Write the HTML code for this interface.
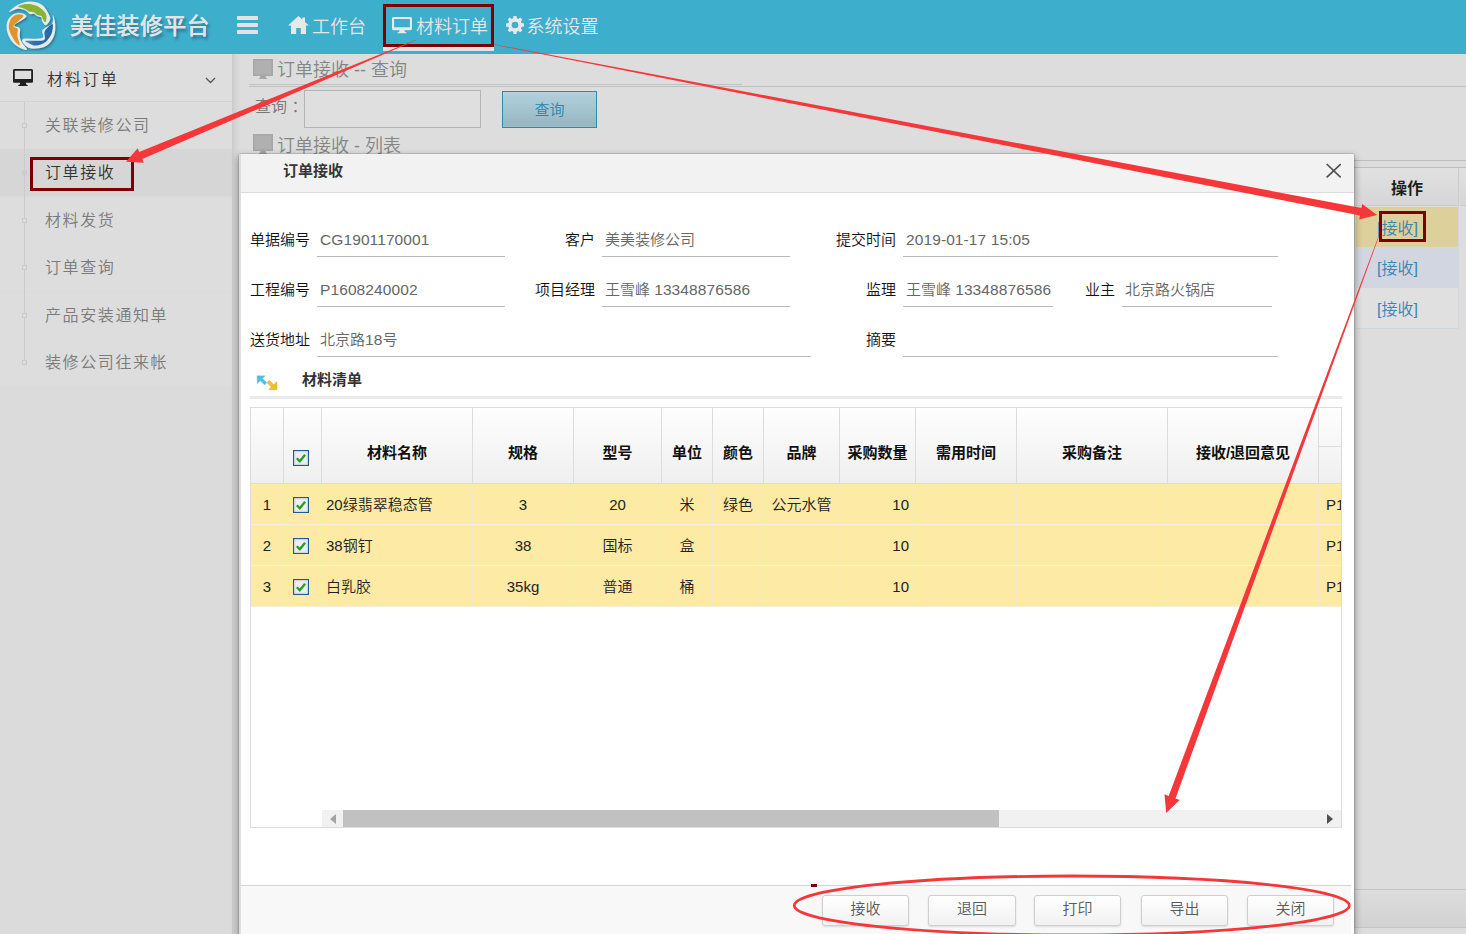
<!DOCTYPE html>
<html lang="zh-CN">
<head>
<meta charset="utf-8">
<title>美佳装修平台</title>
<style>
*{box-sizing:border-box;margin:0;padding:0}
html,body{width:1466px;height:934px;overflow:hidden}
body{position:relative;background:#dddddd;font-family:"Liberation Sans","Noto Sans CJK SC",sans-serif;font-size:15px;font-weight:350;color:#333}
.abs{position:absolute}
/* header */
#hdr{position:absolute;left:0;top:0;width:1466px;height:54px;background:#3eaecd}
#brand{position:absolute;left:70px;top:9px;font-size:23px;font-weight:500;line-height:34px;color:#e1e4e6;letter-spacing:.3px;text-shadow:0 0 .6px #e1e4e6,2px 3px 3px rgba(0,0,0,.33);white-space:nowrap}
.nav{position:absolute;top:12px;height:30px;line-height:30px;font-size:18px;font-weight:350;color:#e6e6e6;white-space:nowrap}
/* sidebar */
#side{position:absolute;left:0;top:54px;width:232px;height:880px;background:#dbdbdb}
#side .top{position:absolute;left:0;top:0;width:232px;height:48px;background:#dedede;border-bottom:1px solid #d3d3d3}
#side .top span{position:absolute;left:47px;top:14px;font-size:16px;line-height:24px;letter-spacing:1.9px;color:#333}
.sub{position:absolute;left:0;width:232px;height:47px;background:#dddddd}
.sub span{position:absolute;left:45px;top:12px;font-size:16px;line-height:24px;letter-spacing:1.6px;color:#7b7b7b;white-space:nowrap}
.sub i{position:absolute;left:22px;top:21px;width:5px;height:5px;border:1px solid #c9c9c9;background:#dddddd;z-index:2}
.sub.on{background:#d6d6d6}
.sub.on span{color:#333}
.sub.on i{background:#cdcdcd;border-color:#cdcdcd}
/* content */
#main{position:absolute;left:232px;top:54px;width:1234px;height:880px;background:#dddddd}
.ptitle{position:absolute;font-size:18px;line-height:26px;color:#858585;white-space:nowrap}
.redbox{position:absolute;border:3px solid #7d0000}
/* dialog */
#dlg{position:absolute;left:239px;top:154px;width:1115px;height:790px;background:#fff;border-radius:2px 2px 0 0;box-shadow:0 0 0 1px rgba(0,0,0,.10),0 3px 7px 1px rgba(0,0,0,.36)}
#dlg .tbar{position:absolute;left:0;top:1px;width:100%;height:39px;border-radius:2px 2px 0 0;background:#f2f2f2;border-bottom:1px solid #dcdcdc}
#dlg .tbar b{position:absolute;left:44px;top:6px;font-size:15px;line-height:22px;color:#363636}
.lbl{position:absolute;margin-top:1px;font-size:15px;line-height:22px;color:#111;white-space:nowrap;text-align:right}
.val{position:absolute;margin-top:1px;font-size:15px;line-height:22px;color:#666;white-space:nowrap}
.ul{position:absolute;height:1px;background:#b9b9b9}
.val u,.c u{text-decoration:none;font-size:15.500px;letter-spacing:.1px}
.bgr{font-size:16px;line-height:43px;text-align:left;padding-left:21px;color:#3b84b6;white-space:nowrap}

#grid{position:absolute;border:1px solid #dcdcdc;background:#fff;overflow:hidden}
.gh{position:absolute;background:linear-gradient(#fefefe,#efefef);border-bottom:1px solid #dcdcdc}
.hc{position:absolute;top:0;height:76px;border-right:1px solid #dcdcdc;text-align:center;font-weight:700;font-size:15px;line-height:22px;padding-top:34px;color:#111;white-space:nowrap;overflow:hidden}
.gr{position:absolute;left:0;width:1090px;height:41px;background:#fdeaa5;border-bottom:1px solid #f6f1dc}
.c{position:absolute;top:0;height:40px;border-right:1px solid #f1ead0;text-align:center;font-size:15px;line-height:22px;padding-top:10px;color:#222;white-space:nowrap;overflow:hidden}
.c.l{text-align:left;padding-left:4px}
.c.l2{text-align:left;padding-left:7px}
.c.r{text-align:right;padding-right:6px}
.cbw{position:absolute;left:9px;margin-top:-1px;width:16px;height:16px}
.cbw svg{display:block}
.btn{position:absolute;height:31px;border:1px solid #cfcfcf;border-radius:3px;background:linear-gradient(#ffffff,#f1f1f1);box-shadow:0 1px 2px rgba(0,0,0,.12);text-align:center;font-size:15px;line-height:25px;color:#5a5a5a}
</style>
</head>
<body>
<!-- ============ main background content ============ -->
<div id="main">
  <div class="abs" style="left:0;top:0;width:9px;height:880px;background:linear-gradient(to right,#cacaca,#d4d4d4 35%,#dddddd)"></div>
  <svg class="abs" style="left:21px;top:5px" width="20" height="20" viewBox="0 0 20 20"><rect x="0" y="0" width="20" height="17" fill="#a7a7a8"/><rect x="1.500" y="1.500" width="17" height="14" fill="#b0b0b1"/><path d="M7.500 17h5l.8 2.300H6.700z" fill="#a3a3a3"/><rect x="6" y="19" width="8" height="1" fill="#a8a8a8"/><rect x="9.500" y="14.500" width="1.600" height="1.200" fill="#a9c04a"/></svg>
  <div class="ptitle" style="left:45px;top:3px">订单接收 -- 查询</div>
  <div class="abs" style="left:17px;top:30px;width:493px;height:1px;background:#c1c1c1"></div>
  <div class="abs" style="left:17px;top:32px;width:1217px;height:1px;background:#c1c1c1"></div>
  <div class="abs" style="left:23px;top:41px;font-size:16px;line-height:24px;color:#787878">查询<span style="margin-left:4.500px">：</span></div>
  <div class="abs" style="left:72px;top:36px;width:177px;height:38px;border:1px solid #b4b4b4;background:#dfdfdf"></div>
  <div class="abs" style="left:270px;top:37px;width:95px;height:37px;border:1px solid #3487af;background:linear-gradient(#b4d3dc,#adcdd8 12%,#a1c1cd 60%,#98b7c2 92%,#9dbcc7);color:#2f84af;font-size:15px;line-height:35px;text-align:center">查询</div>
  <svg class="abs" style="left:21px;top:80px" width="20" height="20" viewBox="0 0 20 20"><rect x="0" y="0" width="20" height="17" fill="#a7a7a8"/><rect x="1.500" y="1.500" width="17" height="14" fill="#b0b0b1"/><path d="M7.500 17h5l.8 2.300H6.700z" fill="#a3a3a3"/><rect x="6" y="19" width="8" height="1" fill="#a8a8a8"/><rect x="9.500" y="14.500" width="1.600" height="1.200" fill="#a9c04a"/></svg>
  <div class="ptitle" style="left:45px;top:78.500px">订单接收 - 列表</div>
  <div class="abs" style="left:1110px;top:106px;width:124px;height:1px;background:#bebebe"></div>
  <!-- background grid (right part visible) -->
  <div class="abs" style="left:1122px;top:113px;width:112px;height:1px;background:#bebebe"></div>
  <div class="abs" style="left:1124px;top:114px;width:103px;height:38px;background:linear-gradient(#e1e1e1,#d6d6d6);border-right:1px solid #cbcbcb;border-bottom:1px solid #cbcbcb;text-align:center;font-size:16px;font-weight:700;line-height:42px;color:#1d1d1d">操作</div>
  <div class="abs" style="left:1228px;top:114px;width:6px;height:38px;background:linear-gradient(#e1e1e1,#d6d6d6);border-bottom:1px solid #cbcbcb"></div>
  <div class="abs bgr" style="left:1124px;top:152.500px;width:102px;height:40.500px;background:#ddd09a">[接收]</div>
  <div class="abs bgr" style="left:1124px;top:193px;width:102px;height:41px;background:#d2d6e0">[接收]</div>
  <div class="abs bgr" style="left:1124px;top:234px;width:102px;height:41px;background:#e0e0e0;border-bottom:1px solid #cdd5de">[接收]</div>
  <div class="abs" style="left:1226px;top:152px;width:1px;height:124px;background:#d3d6da"></div>
  <!-- pager bar at bottom -->
  <div class="abs" style="left:1122px;top:835px;width:112px;height:39px;background:linear-gradient(#dddddd,#d2d2d2);border-top:1px solid #c4c4c4;border-bottom:1px solid #c4c4c4"></div>
</div>

<!-- ============ sidebar ============ -->
<div id="side">
  <div class="top">
    <svg class="abs" style="left:13px;top:15px" width="20" height="18" viewBox="0 0 20 18"><path d="M1.6 0h16.8c.9 0 1.6.7 1.6 1.6v10.6c0 .9-.7 1.6-1.6 1.6h-5.6l.5 1.9c.8.1 1.5.3 1.5.8 0 .4-.4.6-.9.6H6c-.5 0-.9-.2-.9-.6 0-.5.7-.7 1.500-.8l.5-1.900H1.600C.7 13.800 0 13.100 0 12.200V1.600C0 .7.700 0 1.600 0zm.2 1.700v8.400h16.400V1.700z" fill="#1f1f1f"/></svg>
    <span>材料订单</span>
    <svg class="abs" style="left:204.500px;top:22.500px" width="11" height="7" viewBox="0 0 11 7"><path d="M1 1l4.500 4.500L10 1" fill="none" stroke="#555" stroke-width="1.300"/></svg>
  </div>
  <div class="abs" style="left:24px;top:48px;width:1px;height:262px;background:#cbcbcb;z-index:1"></div>
  <div class="sub" style="top:48px"><i></i><span>关联装修公司</span></div>
  <div class="sub on" style="top:95px"><i></i><span>订单接收</span></div>
  <div class="sub" style="top:143px"><i></i><span>材料发货</span></div>
  <div class="sub" style="top:190px"><i></i><span>订单查询</span></div>
  <div class="sub" style="top:238px"><i></i><span>产品安装通知单</span></div>
  <div class="sub" style="top:285px"><i></i><span>装修公司往来帐</span></div>
  
</div>

<!-- ============ header ============ -->
<div id="hdr">
  <svg class="abs" style="left:0;top:0" width="64" height="51" viewBox="0 0 64 51">
<defs><filter id="ls" x="-20%" y="-20%" width="150%" height="150%"><feDropShadow dx="1.2" dy="1.4" stdDeviation="0.9" flood-color="#1b3a4a" flood-opacity=".55"/></filter><linearGradient id="lb" x1="0" y1="0" x2="1" y2="0"><stop offset="0" stop-color="#5f86c4"/><stop offset=".35" stop-color="#2d6fae"/><stop offset="1" stop-color="#2469ab"/></linearGradient></defs>
<g filter="url(#ls)" fill="#e8eaeb">
<path d="M9.0 12.0C9.2 11.2 14.2 6.7 18.0 4.8C21.9 2.9 25.6 1.5 30.0 1.5C34.4 1.5 38.5 2.3 42.0 4.8C45.5 7.3 47.8 12.1 49.2 15.0C50.6 17.9 50.5 18.5 49.8 20.4C49.1 22.3 47.0 25.1 45.6 25.2C44.2 25.3 42.8 22.4 42.0 21.0C41.2 19.6 42.3 18.3 41.4 17.4C40.5 16.5 38.6 16.9 37.2 16.2C35.8 15.5 34.9 14.2 33.6 13.8C32.3 13.4 31.2 14.5 30.0 14.1C28.8 13.7 28.3 12.2 27.0 11.4C25.7 10.6 24.7 10.0 22.8 9.6C20.9 9.2 19.3 8.6 16.8 9.0C14.3 9.4 8.8 12.8 9.0 12.0z"/>
<path d="M18.0 12.9C21.1 12.7 27.1 14.2 26.4 16.5C25.7 18.8 15.6 23.1 14.4 25.2C13.2 27.3 18.8 26.2 19.8 28.2C20.8 30.2 19.5 33.5 19.8 36.0C20.1 38.5 20.3 39.5 21.6 42.0C22.9 44.5 27.7 48.9 27.0 49.8C26.3 50.7 21.1 48.8 18.0 46.8C14.9 44.8 12.3 42.6 10.2 39.0C8.1 35.4 6.7 31.0 6.6 27.0C6.5 23.0 7.5 20.0 9.6 17.4C11.7 14.8 14.9 13.1 18.0 12.9z"/>
<path d="M52.8 15.0C53.3 15.1 55.0 20.1 55.2 24.0C55.4 27.9 55.5 32.0 54.0 36.0C52.5 40.0 50.1 43.3 46.8 45.6C43.5 47.9 39.6 48.4 36.0 48.6C32.4 48.8 29.4 48.6 27.0 46.8C24.6 45.0 20.2 40.6 23.0 39.0C25.8 37.4 38.4 39.8 42.0 38.1C45.6 36.5 40.7 32.7 42.6 30.0C44.5 27.3 50.3 26.1 52.2 23.4C54.1 20.6 52.2 14.9 52.8 15.0z"/>
</g>
<path d="M18.0 6.3C18.3 5.5 23.8 3.9 27.0 3.9C30.2 3.9 34.1 4.5 37.2 6.0C40.3 7.5 44.1 10.8 45.6 13.2C47.1 15.6 46.4 18.9 46.2 20.4C46.1 21.8 45.4 22.3 44.7 21.9C44.1 21.5 42.8 19.0 42.3 18.0C41.8 17.0 42.2 16.4 41.4 15.9C40.5 15.4 38.5 15.6 37.2 15.0C35.9 14.4 35.0 12.9 33.6 12.3C32.2 11.7 30.2 12.0 28.8 11.4C27.4 10.8 27.0 9.8 25.2 9.0C23.4 8.2 17.7 7.1 18.0 6.3z" fill="#89b337"/>
<path d="M17.4 14.4C19.1 14.2 24.0 14.5 23.4 16.2C22.8 17.9 14.4 23.9 13.5 25.8C12.6 27.7 17.1 27.3 17.7 28.8C18.3 30.3 17.1 33.6 17.4 36.0C17.7 38.4 20.2 44.2 19.8 45.0C19.4 45.8 16.5 43.5 15.0 41.4C13.5 39.3 10.5 33.8 9.6 31.2C8.7 28.6 8.6 26.1 9.0 24.0C9.4 21.9 10.7 18.8 12.0 17.4C13.3 16.0 15.7 14.6 17.4 14.4z" fill="#e0952a"/>
<path d="M52.5 24.0C53.5 24.4 52.6 30.9 51.6 33.6C50.6 36.3 47.9 40.2 45.6 42.0C43.3 43.8 38.5 45.4 36.0 45.6C33.5 45.8 30.3 43.9 28.8 43.2C27.3 42.5 23.6 41.2 25.8 40.8C28.1 40.3 41.0 41.6 43.8 40.2C46.6 38.8 43.4 33.6 44.7 31.2C46.0 28.8 51.5 23.6 52.5 24.0z" fill="url(#lb)"/>
</svg>
  <div id="brand">美佳装修平台</div>
  <!-- hamburger -->
  <div class="abs" style="left:237px;top:16px;width:21px;height:3.500px;background:#e3e3e3;border-radius:1px"></div>
  <div class="abs" style="left:237px;top:23px;width:21px;height:3.500px;background:#e3e3e3;border-radius:1px"></div>
  <div class="abs" style="left:237px;top:30px;width:21px;height:3.500px;background:#e3e3e3;border-radius:1px"></div>
  <!-- home -->
  <svg class="abs" style="left:288px;top:16px" width="21" height="18" viewBox="0 0 21 18"><path d="M10.500 0L0 9.600h3V18h5.200v-6h4.600v6H18V9.600h3L17 5.900V1.500h-2.600v2z" fill="#e8e8e8"/></svg>
  <div class="nav" style="left:312px">工作台</div>
  <!-- active underline -->
  <div class="abs" style="left:383px;top:47px;width:111px;height:4px;background:#e2e2e2"></div>
  <svg class="abs" style="left:392px;top:17px" width="20" height="17" viewBox="0 0 20 17"><path d="M1.600 0h16.800c.9 0 1.600.7 1.600 1.600v10c0 .9-.7 1.600-1.600 1.600h-5.900l.4 1.700c.8.100 1.700.3 1.700.8 0 .4-.4.600-.9.600H6.300c-.5 0-.9-.2-.9-.6 0-.5.900-.7 1.700-.8l.4-1.700H1.600C.7 13.200 0 12.500 0 11.600v-10C0 .7.700 0 1.600 0zm.5 2v8.300h15.800V2z" fill="#e8e8e8"/></svg>
  <div class="nav" style="left:416px">材料订单</div>
  <!-- gear -->
  <svg class="abs" style="left:505.500px;top:15.800px" width="18" height="18" viewBox="0 0 19 19"><path fill="#e8e8e8" fill-rule="evenodd" d="M8 0h3l.5 2.500 1.500.6 2.100-1.400 2.100 2.100-1.400 2.100.6 1.500 2.600.6v3l-2.600.5-.6 1.500 1.400 2.100-2.100 2.100-2.100-1.400-1.500.6L11 19H8l-.5-2.600-1.500-.6-2.100 1.400-2.100-2.100 1.400-2.100-.6-1.500L0 11V8l2.600-.6.600-1.500-1.400-2.100 2.100-2.100L6 3.100l1.500-.6zM9.500 6a3.500 3.500 0 100 7 3.500 3.500 0 000-7z"/></svg>
  <div class="nav" style="left:526.500px">系统设置</div>
</div>
<div class="redbox" style="left:383px;top:4px;width:111px;height:43px"></div>
<div class="redbox" style="left:30px;top:157px;width:104px;height:34px"></div>
<div class="redbox" style="left:1379px;top:211px;width:47px;height:31px"></div>

<div id="dlg"><div class="abs" style="left:0;top:-1px;width:1115px;height:790px">
<div class="abs" style="left:0;top:1px;width:2px;height:800px;background:#dedede;z-index:3"></div><div class="tbar"><b>订单接收</b><svg class="abs" style="left:1087px;top:9px" width="15" height="15" viewBox="0 0 15 15"><path d="M.7 1l14 13.300M14.700 1L.7 14.300" stroke="#505050" stroke-width="1.700" fill="none"/></svg></div>
<div class="lbl" style="left:-9px;top:75px;width:80px">单据编号</div>
<div class="val" style="left:81px;top:75px"><u>CG1901170001</u></div>
<div class="ul" style="left:78px;top:103px;width:188px"></div>
<div class="lbl" style="left:276px;top:75px;width:80px">客户</div>
<div class="val" style="left:366px;top:75px">美美装修公司</div>
<div class="ul" style="left:363px;top:103px;width:188px"></div>
<div class="lbl" style="left:577px;top:75px;width:80px">提交时间</div>
<div class="val" style="left:667px;top:75px"><u>2019-01-17 15:05</u></div>
<div class="ul" style="left:664px;top:103px;width:375px"></div>
<div class="lbl" style="left:-9px;top:125px;width:80px">工程编号</div>
<div class="val" style="left:81px;top:125px"><u>P1608240002</u></div>
<div class="ul" style="left:78px;top:153px;width:188px"></div>
<div class="lbl" style="left:276px;top:125px;width:80px">项目经理</div>
<div class="val" style="left:366px;top:125px">王雪峰 <u>13348876586</u></div>
<div class="ul" style="left:363px;top:153px;width:188px"></div>
<div class="lbl" style="left:577px;top:125px;width:80px">监理</div>
<div class="val" style="left:667px;top:125px">王雪峰 <u>13348876586</u></div>
<div class="ul" style="left:664px;top:153px;width:150px"></div>
<div class="lbl" style="left:796px;top:125px;width:80px">业主</div>
<div class="val" style="left:886px;top:125px">北京路火锅店</div>
<div class="ul" style="left:883px;top:153px;width:150px"></div>
<div class="lbl" style="left:-9px;top:175px;width:80px">送货地址</div>
<div class="val" style="left:81px;top:175px">北京路<u>18</u>号</div>
<div class="ul" style="left:78px;top:203px;width:494px"></div>
<div class="lbl" style="left:577px;top:175px;width:80px">摘要</div>
<div class="ul" style="left:664px;top:203px;width:375px"></div>
<svg class="abs" style="left:17px;top:222px" width="22" height="16" viewBox="0 0 22 16"><path d="M1 .7h8.300L6.600 3.400l4.300 4.300-2.300 2.300-4.300-4.300L1.200 8.900z" fill="#4fbde0" stroke="#8fd6ec" stroke-width=".5"/><path d="M21 14.700h-8.300l2.700-2.700-4.300-4.300 2.300-2.300 4.300 4.300 3.100-3.200z" fill="#e7c12f" stroke="#cfa92a" stroke-width=".5"/></svg>
<div class="abs" style="left:63px;top:216px;font-size:15px;font-weight:700;line-height:22px;color:#333">材料清单</div>
<div class="abs" style="left:11px;top:243px;width:1092px;height:3px;background:#ebebeb"></div>
<div id="grid" style="left:11px;top:254px;width:1092px;height:421px">
<div class="gh" style="left:0;top:0;width:1090px;height:76px"></div>
<div class="hc" style="left:0px;width:33px"></div>
<div class="hc" style="left:33px;width:38px"><span class="cbw" style="top:43px"><svg class="cb" width="16" height="16" viewBox="0 0 16 16"><rect x=".6" y=".6" width="14.800" height="14.800" fill="#f3f3f3" stroke="#20598f" stroke-width="1.200"/><rect x="2" y="2" width="12" height="12" fill="#efefef" stroke="#d9dee3" stroke-width="1"/><path d="M3.800 8.200l3 3 5.300-6.500" fill="none" stroke="#22a022" stroke-width="2.300"/></svg></span></div>
<div class="hc" style="left:71px;width:151px">材料名称</div>
<div class="hc" style="left:222px;width:101px">规格</div>
<div class="hc" style="left:323px;width:88px">型号</div>
<div class="hc" style="left:411px;width:51px">单位</div>
<div class="hc" style="left:462px;width:51px">颜色</div>
<div class="hc" style="left:513px;width:76px">品牌</div>
<div class="hc" style="left:589px;width:76px">采购数量</div>
<div class="hc" style="left:665px;width:101px">需用时间</div>
<div class="hc" style="left:766px;width:151px">采购备注</div>
<div class="hc" style="left:917px;width:151px">接收/退回意见</div>
<div class="hc" style="left:1068px;width:24px"></div>
<div class="abs" style="left:1068px;top:38px;width:24px;height:1px;background:#dcdcdc"></div>
<div class="gr" style="top:76px">
<div class="c" style="left:0px;width:33px">1</div>
<div class="c" style="left:33px;width:38px"><span class="cbw" style="top:14px"><svg class="cb" width="16" height="16" viewBox="0 0 16 16"><rect x=".6" y=".6" width="14.800" height="14.800" fill="#f3f3f3" stroke="#20598f" stroke-width="1.200"/><rect x="2" y="2" width="12" height="12" fill="#efefef" stroke="#d9dee3" stroke-width="1"/><path d="M3.800 8.200l3 3 5.300-6.500" fill="none" stroke="#22a022" stroke-width="2.300"/></svg></span></div>
<div class="c l" style="left:71px;width:151px">20绿翡翠稳态管</div>
<div class="c" style="left:222px;width:101px">3</div>
<div class="c" style="left:323px;width:88px">20</div>
<div class="c" style="left:411px;width:51px">米</div>
<div class="c" style="left:462px;width:51px">绿色</div>
<div class="c" style="left:513px;width:76px">公元水管</div>
<div class="c r" style="left:589px;width:76px">10</div>
<div class="c" style="left:665px;width:101px"></div>
<div class="c" style="left:766px;width:151px"></div>
<div class="c" style="left:917px;width:151px"></div>
<div class="c l2" style="left:1068px;width:24px">P1</div>
</div>
<div class="gr" style="top:117px">
<div class="c" style="left:0px;width:33px">2</div>
<div class="c" style="left:33px;width:38px"><span class="cbw" style="top:14px"><svg class="cb" width="16" height="16" viewBox="0 0 16 16"><rect x=".6" y=".6" width="14.800" height="14.800" fill="#f3f3f3" stroke="#20598f" stroke-width="1.200"/><rect x="2" y="2" width="12" height="12" fill="#efefef" stroke="#d9dee3" stroke-width="1"/><path d="M3.800 8.200l3 3 5.300-6.500" fill="none" stroke="#22a022" stroke-width="2.300"/></svg></span></div>
<div class="c l" style="left:71px;width:151px">38钢钉</div>
<div class="c" style="left:222px;width:101px">38</div>
<div class="c" style="left:323px;width:88px">国标</div>
<div class="c" style="left:411px;width:51px">盒</div>
<div class="c" style="left:462px;width:51px"></div>
<div class="c" style="left:513px;width:76px"></div>
<div class="c r" style="left:589px;width:76px">10</div>
<div class="c" style="left:665px;width:101px"></div>
<div class="c" style="left:766px;width:151px"></div>
<div class="c" style="left:917px;width:151px"></div>
<div class="c l2" style="left:1068px;width:24px">P1</div>
</div>
<div class="gr" style="top:158px">
<div class="c" style="left:0px;width:33px">3</div>
<div class="c" style="left:33px;width:38px"><span class="cbw" style="top:14px"><svg class="cb" width="16" height="16" viewBox="0 0 16 16"><rect x=".6" y=".6" width="14.800" height="14.800" fill="#f3f3f3" stroke="#20598f" stroke-width="1.200"/><rect x="2" y="2" width="12" height="12" fill="#efefef" stroke="#d9dee3" stroke-width="1"/><path d="M3.800 8.200l3 3 5.300-6.500" fill="none" stroke="#22a022" stroke-width="2.300"/></svg></span></div>
<div class="c l" style="left:71px;width:151px">白乳胶</div>
<div class="c" style="left:222px;width:101px">35kg</div>
<div class="c" style="left:323px;width:88px">普通</div>
<div class="c" style="left:411px;width:51px">桶</div>
<div class="c" style="left:462px;width:51px"></div>
<div class="c" style="left:513px;width:76px"></div>
<div class="c r" style="left:589px;width:76px">10</div>
<div class="c" style="left:665px;width:101px"></div>
<div class="c" style="left:766px;width:151px"></div>
<div class="c" style="left:917px;width:151px"></div>
<div class="c l2" style="left:1068px;width:24px">P1</div>
</div>
<div class="abs" style="left:71px;top:402px;width:1019px;height:17px;background:#f1f1f1"></div>
<div class="abs" style="left:92px;top:402px;width:656px;height:17px;background:#c1c1c1"></div>
<svg class="abs" style="left:78px;top:406px" width="8" height="10" viewBox="0 0 8 10"><path d="M7 0v10L1 5z" fill="#a3a3a3"/></svg>
<svg class="abs" style="left:1075px;top:406px" width="8" height="10" viewBox="0 0 8 10"><path d="M1 0v10l6-5z" fill="#505050"/></svg>
</div>
<div class="abs" style="left:0;top:732px;width:1112px;height:60px;background:#f8f8f8;border-top:1px solid #d4d4d4"></div>
<div class="btn" style="left:583px;top:742px;width:87px">接收</div>
<div class="btn" style="left:689px;top:742px;width:88px">退回</div>
<div class="btn" style="left:795px;top:742px;width:87px">打印</div>
<div class="btn" style="left:902px;top:742px;width:87px">导出</div>
<div class="btn" style="left:1008px;top:742px;width:87px">关闭</div>
</div></div>
<svg class="abs" style="left:0;top:0;pointer-events:none" width="1466" height="934" viewBox="0 0 1466 934">
<g fill="#f5373a">
<polygon points="415.9,39.7 139.2,151.9 137.7,148.2 126.0,161.7 143.8,162.8 142.3,159.1 416.1,40.3"/>
<polygon points="493.9,44.8 1360.0,215.5 1359.2,219.6 1377.1,214.9 1362.2,203.9 1361.4,208.0 494.1,44.2"/>
<polygon points="1378.2,236.9 1168.7,795.9 1164.5,794.3 1166.2,813.1 1179.7,799.9 1175.5,798.4 1378.8,237.1"/>
</g>
<ellipse cx="1071.800" cy="905.500" rx="277.500" ry="29.500" fill="none" stroke="#f5373a" stroke-width="2.800"/>
<rect x="811" y="884" width="6" height="3" fill="#7d0000"/>
</svg>
</body>
</html>
